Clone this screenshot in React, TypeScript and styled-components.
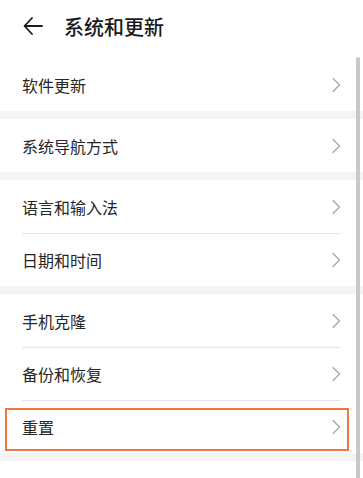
import styled, { createGlobalStyle } from "styled-components";

const GlobalStyle = createGlobalStyle`
  body {
    margin: 0;
    background: #ffffff;
    font-family: "Noto Sans CJK SC", "Noto Sans", sans-serif;
  }
`;

const Page = styled.div`
  position: relative;
  width: 363px;
  height: 478px;
  overflow: hidden;
  background: #ffffff;
`;

const Header = styled.div`
  height: 58px;
  display: flex;
  align-items: center;
  padding: 0 0 2px 22px;
  box-sizing: border-box;
  gap: 20px;
`;

const Back = styled.svg`
  width: 22px;
  height: 22px;
  margin-top: -4px;
`;

const Title = styled.h1`
  margin: 0 0 4px 0;
  font-size: 20px;
  font-weight: 500;
  color: #1a1a1a;
`;

const Group = styled.div`
  background: #ffffff;
  border-bottom: 8px solid #f4f4f4;
`;

const Row = styled.div<{ $divider?: boolean }>`
  position: relative;
  height: 53px;
  display: flex;
  align-items: center;
  justify-content: space-between;
  margin: 0 22px;
  padding-top: 0;
  box-sizing: border-box;
  border-top: ${(p) => (p.$divider ? "1px solid #e6e6e6" : "none")};
`;

const Highlight = styled.div`
  position: absolute;
  left: -17px;
  right: -8px;
  top: 7px;
  bottom: 2px;
  border: 2.5px solid #f07545;
  pointer-events: none;
`;

const Label = styled.span`
  font-size: 16px;
  color: #262626;
`;

const Chevron = styled.svg`
  width: 10px;
  height: 16px;
`;

const Scrollbar = styled.div`
  position: absolute;
  right: 3px;
  top: 57px;
  bottom: 0;
  width: 4px;
  background: #c8c8c8;
  border-radius: 2px 2px 0 0;
`;

const groups: string[][] = [
  ["软件更新"],
  ["系统导航方式"],
  ["语言和输入法", "日期和时间"],
  ["手机克隆", "备份和恢复", "重置"],
];

const Arrow = () => (
  <Chevron viewBox="0 0 10 16">
    <path d="M2 1.5 L8.5 8 L2 14.5" fill="none" stroke="#a8a8a8" strokeWidth="1.3" strokeLinecap="round" strokeLinejoin="round" />
  </Chevron>
);

const App = () => {
  return (
    <Page>
      <GlobalStyle />
      <Header>
        <Back viewBox="0 0 22 22">
          <path d="M20 11 H3 M10 3 L2.5 11 L10 19" fill="none" stroke="#1a1a1a" strokeWidth="1.8" strokeLinecap="round" strokeLinejoin="round" />
        </Back>
        <Title>系统和更新</Title>
      </Header>
      {groups.map((items, gi) => (
        <Group key={gi}>
          {items.map((label, i) => (
            <Row key={label} $divider={i > 0}>
              <Label>{label}</Label>
              <Arrow />
              {label === "重置" && <Highlight />}
            </Row>
          ))}
        </Group>
      ))}
      <Scrollbar />
    </Page>
  );
};

export default App;
